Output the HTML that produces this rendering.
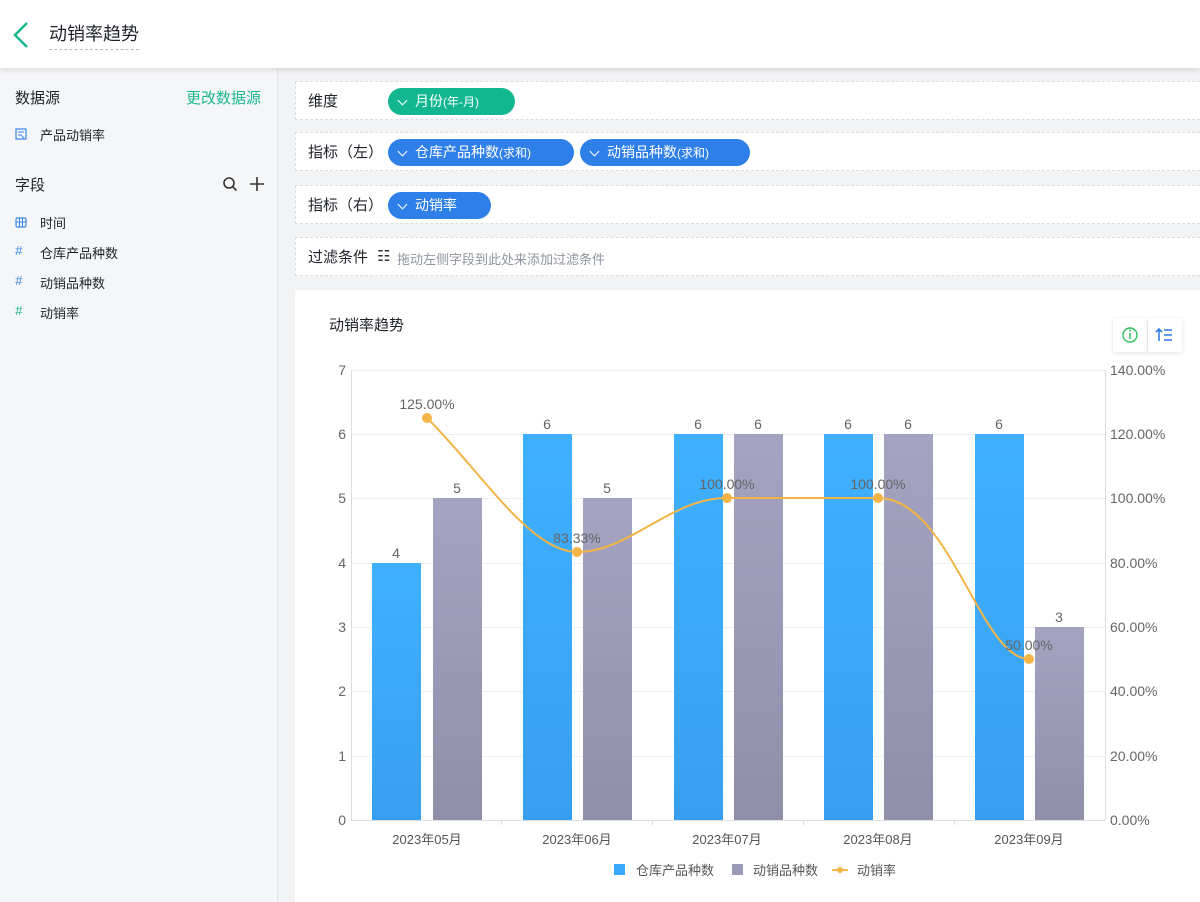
<!DOCTYPE html>
<html><head><meta charset="utf-8"><style>
*{margin:0;padding:0;box-sizing:border-box}
body{width:1200px;height:902px;overflow:hidden;background:#f2f3f5;font-family:"Liberation Sans","Noto Sans CJK SC",sans-serif;color:#1f2329;position:relative}
.hdr{position:absolute;left:0;top:0;width:1200px;height:68px;background:#fff;box-shadow:0 2px 6px rgba(0,0,0,.12);z-index:2}
.hdr .t{position:absolute;left:49px;top:20px;font-size:18px;padding-bottom:3px;border-bottom:1px dashed #bbb}
.side{position:absolute;left:0;top:68px;width:278px;height:834px;background:#f5f6f8;border-right:1px solid #e3e5e8}
.s{position:absolute;font-size:15px}
.f{position:absolute;font-size:13px;left:40px}
.ic{position:absolute;left:15px;font-size:13px;font-style:italic}
.row{position:absolute;left:295px;width:905px;background:#fff;border:1px dashed #d8dbe0;border-right:none;height:39px}
.row .l{position:absolute;left:12px;top:8px;font-size:15px}
.pill{position:absolute;top:6px;height:27px;border-radius:14px;color:#fff;font-size:14px;line-height:27px;padding-left:27px}
.pill:before{content:"";position:absolute;left:11px;top:9px;width:6px;height:6px;border-right:1.5px solid #fff;border-bottom:1.5px solid #fff;transform:rotate(45deg)}
.pill small{font-size:12px}
.card{position:absolute;left:295px;top:290px;width:905px;height:612px;background:#fff}
</style></head><body>
<div class="hdr">
<svg style="position:absolute;left:11px;top:21px" width="20" height="28"><path d="M16 2 L4 14 L16 26" fill="none" stroke="#1cb68f" stroke-width="2.5"/></svg>
<div class="t">动销率趋势</div>
</div>
<div class="side">
<div class="s" style="left:15px;top:19px">数据源</div>
<div class="s" style="left:186px;top:19px;color:#1cb68f">更改数据源</div>
<svg style="position:absolute;left:15px;top:60px" width="12" height="12"><rect x="1" y="1" width="10" height="10" fill="none" stroke="#3a86e8" stroke-width="1.2"/><path d="M3 4h6M3 7h3M6 7l3 3" stroke="#3a86e8" stroke-width="1"/></svg>
<div class="f" style="top:57px">产品动销率</div>
<div class="s" style="left:15px;top:106px">字段</div>
<svg style="position:absolute;left:222px;top:108px" width="16" height="16"><circle cx="7" cy="7" r="5" fill="none" stroke="#333" stroke-width="1.6"/><path d="M11 11l3.5 3.5" stroke="#333" stroke-width="1.6"/></svg>
<svg style="position:absolute;left:249px;top:108px" width="16" height="16"><path d="M8 1v14M1 8h14" stroke="#333" stroke-width="1.6"/></svg>
<svg style="position:absolute;left:15px;top:148px" width="12" height="12"><rect x="1" y="2" width="10" height="9" rx="1.5" fill="none" stroke="#3a86e8" stroke-width="1.2"/><path d="M1 6h10M4.5 2v9M7.5 2v9" stroke="#3a86e8" stroke-width="1"/></svg>
<div class="f" style="top:145px">时间</div>
<div class="ic" style="top:175px;color:#3a86e8">#</div><div class="f" style="top:175px">仓库产品种数</div>
<div class="ic" style="top:205px;color:#3a86e8">#</div><div class="f" style="top:205px">动销品种数</div>
<div class="ic" style="top:235px;color:#1cb68f">#</div><div class="f" style="top:235px">动销率</div>
</div>
<div class="row" style="top:81px"><div class="l">维度</div><div class="pill" style="left:92px;width:127px;background:#12b78f">月份<small>(年-月)</small></div></div>
<div class="row" style="top:132px"><div class="l">指标（左）</div><div class="pill" style="left:92px;width:186px;background:#2f7fe8">仓库产品种数<small>(求和)</small></div><div class="pill" style="left:284px;width:170px;background:#2f7fe8">动销品种数<small>(求和)</small></div></div>
<div class="row" style="top:185px"><div class="l">指标（右）</div><div class="pill" style="left:92px;width:103px;background:#2f7fe8">动销率</div></div>
<div class="row" style="top:237px"><div class="l">过滤条件</div><div style="position:absolute;left:81px;top:9px;font-size:15px;color:#333">☷</div><div style="position:absolute;left:101px;top:11px;font-size:13px;color:#8f959e">拖动左侧字段到此处来添加过滤条件</div></div>
<div class="card">
<div style="position:absolute;left:34px;top:24px;font-size:15px">动销率趋势</div>
<div style="position:absolute;left:818px;top:28px;width:34px;height:34px;background:#fff;box-shadow:0 1px 4px rgba(0,0,0,.12)"><svg width="34" height="34"><circle cx="17" cy="17" r="7" fill="none" stroke="#2fbf5f" stroke-width="1.4"/><path d="M17 15v6" stroke="#2fbf5f" stroke-width="1.5"/><circle cx="17" cy="12.5" r="1" fill="#2fbf5f"/></svg></div>
<div style="position:absolute;left:853px;top:28px;width:34px;height:34px;background:#fff;box-shadow:0 1px 4px rgba(0,0,0,.12)"><svg width="34" height="34"><path d="M11 23V11M8 14l3-3 3 3M16 12h8M16 17h8M16 22h8" fill="none" stroke="#2f7fe8" stroke-width="1.6"/></svg></div>
</div>
<svg style="position:absolute;left:0;top:0" width="1200" height="902" font-family="Liberation Sans, Noto Sans CJK SC, sans-serif">
<defs>
<linearGradient id="b" x1="0" y1="0" x2="0" y2="1"><stop offset="0" stop-color="#3fb0ff"/><stop offset="1" stop-color="#389ff0"/></linearGradient>
<linearGradient id="g" x1="0" y1="0" x2="0" y2="1"><stop offset="0" stop-color="#a4a4c2"/><stop offset="1" stop-color="#8f8faa"/></linearGradient>
</defs>
<g stroke="#f0f0f0">
<path d="M351 370.5H1105M351 434.5H1105M351 498.5H1105M351 563.5H1105M351 627.5H1105M351 691.5H1105M351 756.5H1105"/>
</g>
<path d="M351.5 370V820M1105.5 370V820M351 820.5H1105" stroke="#ddd"/>
<path d="M501.5 820v5M652.5 820v5M803.5 820v5M954.5 820v5" stroke="#ddd"/>
<g font-size="14" fill="#666" text-anchor="end">
<text x="346" y="375">7</text><text x="346" y="439">6</text><text x="346" y="503">5</text><text x="346" y="568">4</text><text x="346" y="632">3</text><text x="346" y="696">2</text><text x="346" y="761">1</text><text x="346" y="825">0</text>
</g>
<g font-size="14" fill="#666">
<text x="1110" y="375">140.00%</text><text x="1110" y="439">120.00%</text><text x="1110" y="503">100.00%</text><text x="1110" y="568">80.00%</text><text x="1110" y="632">60.00%</text><text x="1110" y="696">40.00%</text><text x="1110" y="761">20.00%</text><text x="1110" y="825">0.00%</text>
</g>
<g fill="url(#b)">
<rect x="372" y="563" width="49" height="257"/><rect x="523" y="434" width="49" height="386"/><rect x="674" y="434" width="49" height="386"/><rect x="824" y="434" width="49" height="386"/><rect x="975" y="434" width="49" height="386"/>
</g>
<g fill="url(#g)">
<rect x="433" y="498" width="49" height="322"/><rect x="583" y="498" width="49" height="322"/><rect x="734" y="434" width="49" height="386"/><rect x="884" y="434" width="49" height="386"/><rect x="1035" y="627" width="49" height="193"/>
</g>
<g font-size="14" fill="#666" text-anchor="middle">
<text x="396" y="558">4</text><text x="457" y="493">5</text><text x="547" y="429">6</text><text x="607" y="493">5</text><text x="698" y="429">6</text><text x="758" y="429">6</text><text x="848" y="429">6</text><text x="908" y="429">6</text><text x="999" y="429">6</text><text x="1059" y="622">3</text>
</g>
<path d="M427 418 C480 470,530 552,577 552 C630 552,670 498,727 498 L878 498 C950 498,980 659,1029 659" fill="none" stroke="#f4b446" stroke-width="2"/>
<g fill="#f4b446"><circle cx="427" cy="418" r="5"/><circle cx="577" cy="552" r="5"/><circle cx="727" cy="498" r="5"/><circle cx="878" cy="498" r="5"/><circle cx="1029" cy="659" r="5"/></g>
<g font-size="14" fill="#666" text-anchor="middle">
<text x="427" y="409">125.00%</text><text x="577" y="543">83.33%</text><text x="727" y="489">100.00%</text><text x="878" y="489">100.00%</text><text x="1029" y="650">50.00%</text>
</g>
<g font-size="13" fill="#555" text-anchor="middle">
<text x="427" y="844">2023年05月</text><text x="577" y="844">2023年06月</text><text x="727" y="844">2023年07月</text><text x="878" y="844">2023年08月</text><text x="1029" y="844">2023年09月</text>
</g>
<rect x="614" y="864" width="11" height="11" fill="#3aa8fa"/>
<text x="636" y="875" font-size="13" fill="#555">仓库产品种数</text>
<rect x="732" y="864" width="11" height="11" fill="#9a9ab8"/>
<text x="753" y="875" font-size="13" fill="#555">动销品种数</text>
<path d="M832 870H848" stroke="#f4b446" stroke-width="2"/><circle cx="840" cy="870" r="3" fill="#f4b446"/>
<text x="857" y="875" font-size="13" fill="#555">动销率</text>
</svg>
</body></html>
